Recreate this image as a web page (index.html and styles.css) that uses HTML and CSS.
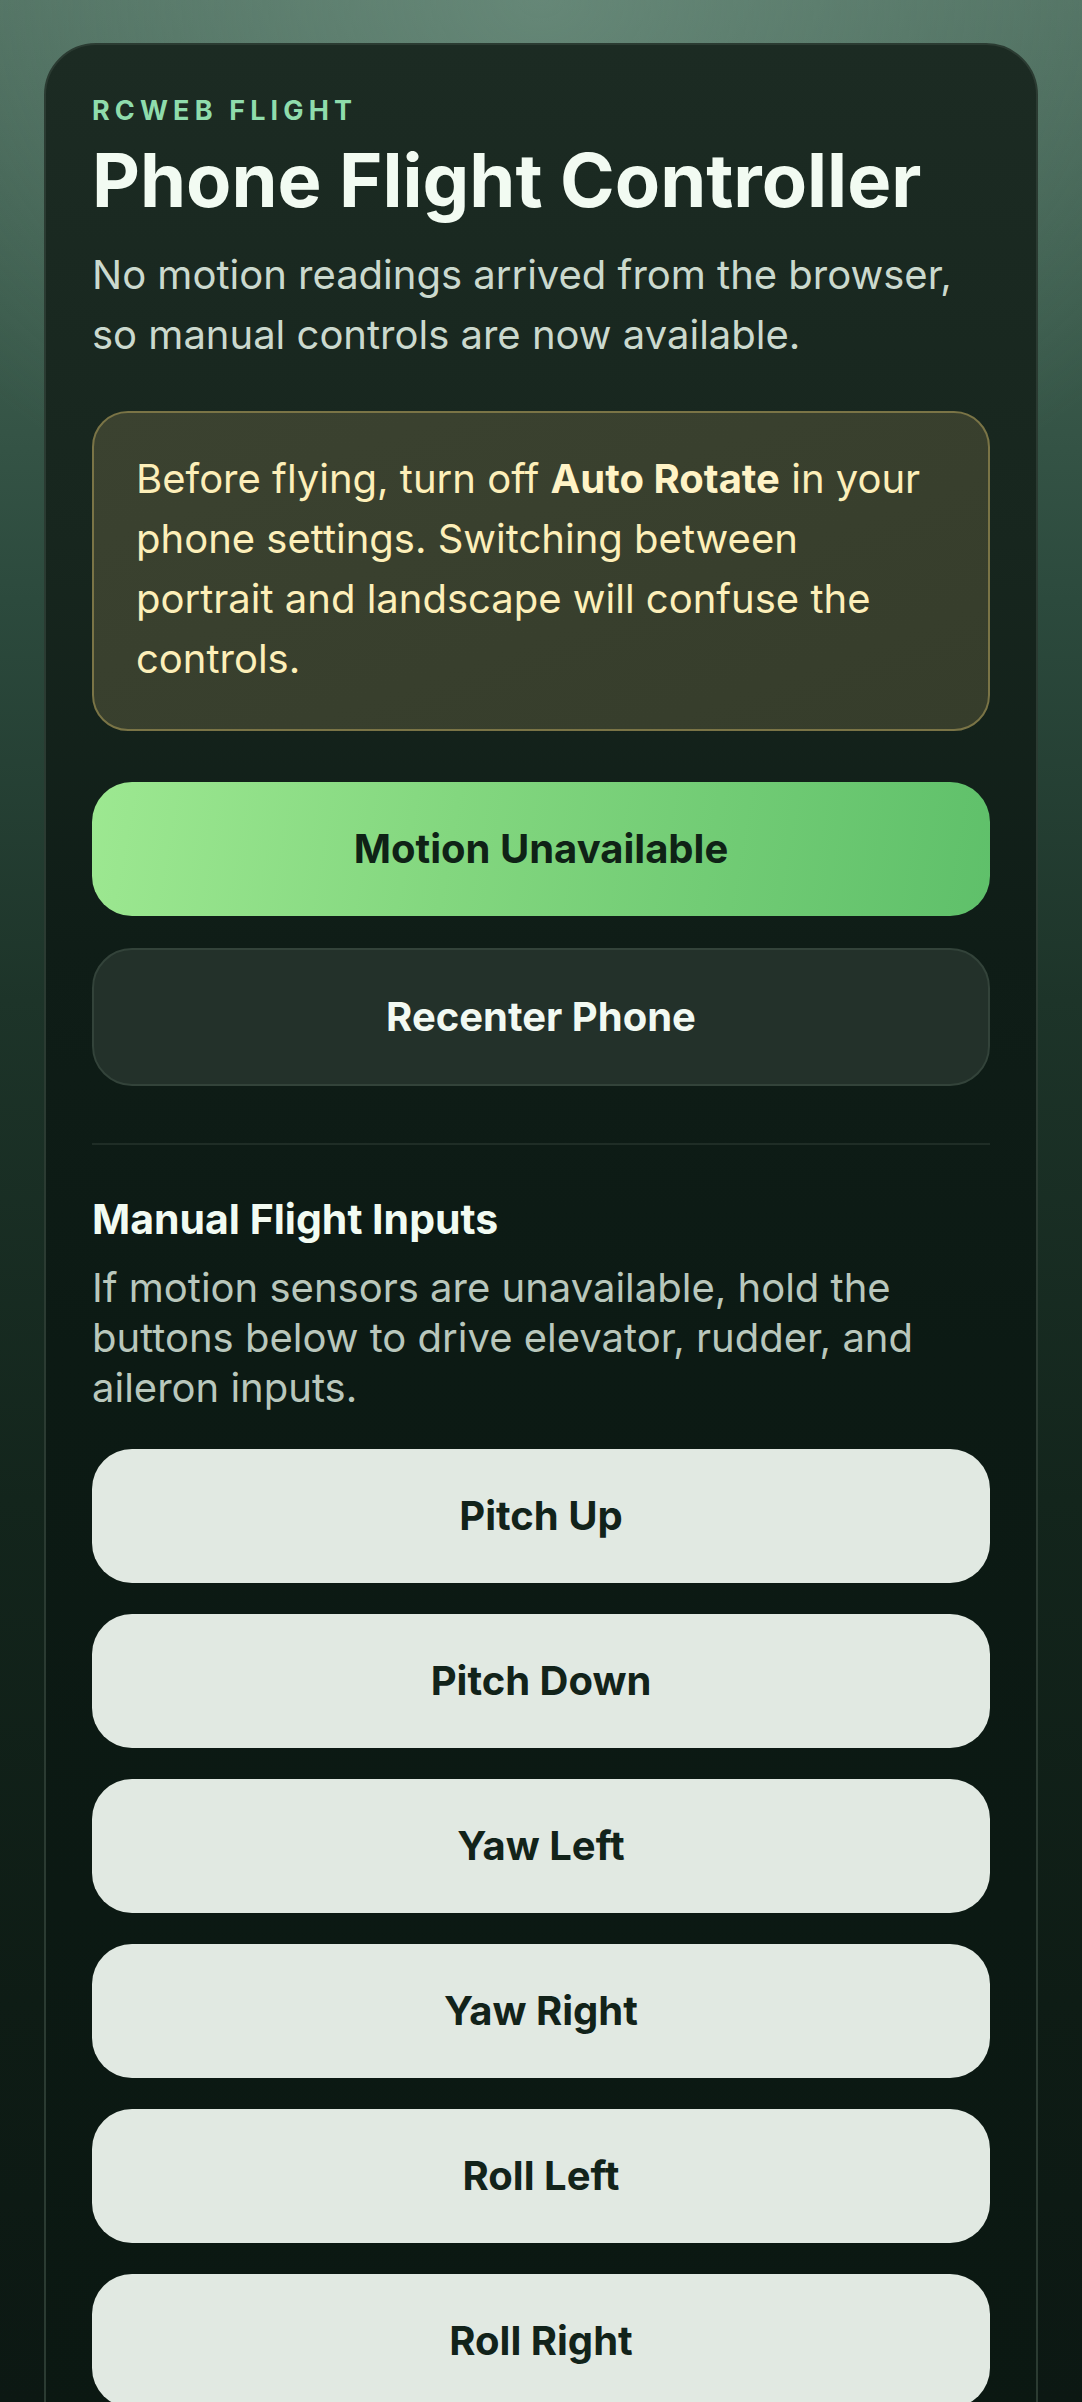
FILE: index.html
```html
<!DOCTYPE html>
<html lang="en">
<head>
<meta charset="utf-8">
<meta name="viewport" content="width=device-width, initial-scale=1">
<title>Phone Flight Controller</title>
<link rel="stylesheet" href="styles.css">
</head>
<body>
<main class="card">
  <p class="eyebrow">RCWEB FLIGHT</p>
  <h1 class="title">Phone Flight Controller</h1>
  <p class="lead">No motion readings arrived from the browser, so manual controls are now available.</p>
  <div class="notice">Before flying, turn off <strong>Auto Rotate</strong> in your phone settings. Switching between portrait and landscape will confuse the controls.</div>
  <button class="btn btn-primary" type="button">Motion Unavailable</button>
  <button class="btn btn-secondary" type="button">Recenter Phone</button>
  <hr class="divider">
  <section class="manual">
    <h2 class="manual-title">Manual Flight Inputs</h2>
    <p class="hint">If motion sensors are unavailable, hold the buttons below to drive elevator, rudder, and aileron inputs.</p>
    <div class="pad">
      <button class="btn btn-manual" type="button">Pitch Up</button>
      <button class="btn btn-manual" type="button">Pitch Down</button>
      <button class="btn btn-manual" type="button">Yaw Left</button>
      <button class="btn btn-manual" type="button">Yaw Right</button>
      <button class="btn btn-manual" type="button">Roll Left</button>
      <button class="btn btn-manual" type="button">Roll Right</button>
    </div>
  </section>
</main>
</body>
</html>
```
FILE: styles.css
```css
* { box-sizing: border-box; }

html { background: #0d1913; }

body {
  margin: 0;
  padding: 43px 44px 80px;
  min-height: 2402px;
  font-family: Inter, "Noto Sans", "DejaVu Sans", sans-serif;
  color: #f1faf1;
  background:
    radial-gradient(ellipse 70% 22% at 50% 0%, rgba(120, 155, 138, 0.55) 0%, rgba(120, 155, 138, 0) 100%),
    linear-gradient(180deg, #4f6f60 0px, #3c5c4d 300px, #2c4a3d 600px, #1d3429 1000px, #13251c 1500px, #0e1c15 2000px, #0c1813 2402px);
}

.card {
  display: flex;
  flex-direction: column;
  border: 2px solid #2b3b32;
  border-radius: 52px;
  padding: 50px 46px 120px;
  background: linear-gradient(180deg, #1c2b23 0px, #17261e 500px, #0f1d17 900px, #0c1a14 1300px, #0b1812 2400px);
}

.eyebrow {
  margin: 0;
  font-size: 27px;
  line-height: 32px;
  font-weight: 700;
  letter-spacing: 0.19em;
  color: #8fdcac;
}

.title {
  margin: 11px 0 0;
  font-size: 74px;
  line-height: 84px;
  font-weight: 700;
  color: #f2fbf2;
}

.lead {
  margin: 23px 0 0;
  font-size: 40px;
  line-height: 60px;
  color: #cbd9ce;
}

.notice {
  margin-top: 46px;
  padding: 36px 52px 40px 42px;
  border: 2px solid #7a7446;
  border-radius: 36px;
  background: linear-gradient(160deg, #3b4230 0%, #363d2b 100%);
  font-size: 40px;
  line-height: 60px;
  color: #fdefb9;
}

.notice strong {
  font-weight: 700;
  color: #fff3c6;
}

.btn {
  display: flex;
  align-items: center;
  justify-content: center;
  width: 100%;
  margin: 0;
  padding: 0;
  border: 0;
  border-radius: 40px;
  font-family: inherit;
  font-size: 40px;
  font-weight: 700;
  line-height: 1;
}

.btn-primary {
  margin-top: 51px;
  height: 134px;
  background: linear-gradient(100deg, #9de891 0%, #83d77f 40%, #5fc06a 100%);
  color: #0f2216;
}

.btn-secondary {
  margin-top: 32px;
  height: 138px;
  border: 2px solid #33433a;
  background: #23312a;
  color: #f2f9f2;
}

.divider {
  margin: 57px 0 0;
  height: 2px;
  border: 0;
  background: #1f2d26;
}

.manual {
  display: flex;
  flex-direction: column;
}

.manual-title {
  margin: 48.6px 0 0;
  font-size: 41px;
  line-height: 50px;
  font-weight: 700;
  color: #f2fbf2;
}

.hint {
  margin: 19px 0 0;
  font-size: 40px;
  line-height: 50px;
  color: #b9c7bc;
}

.pad {
  display: flex;
  flex-direction: column;
  gap: 31px;
  margin-top: 36.6px;
}

.btn-manual {
  height: 134px;
  background: #e1e9e2;
  color: #12231a;
}
```
